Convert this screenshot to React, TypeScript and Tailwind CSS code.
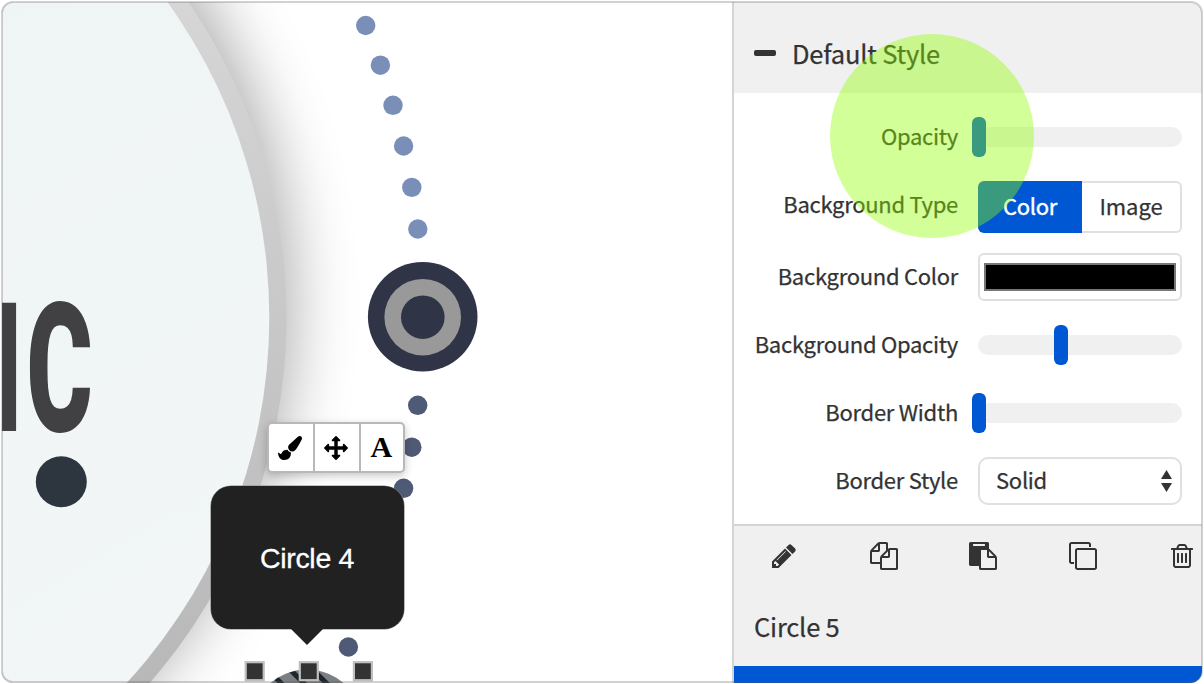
import type { ReactNode } from 'react';

const ICONS = {
  pencil:
    'M491 1536l91-91-235-235-91 91v107h128v128h107zm523-928q0-22-22-22-10 0-17 7l-542 542q-7 7-7 17 0 22 22 22 10 0 17-7l542-542q7-7 7-17zm-54-192l416 416-832 832h-416v-416zm683 96q0 53-37 90l-166 166-416-416 166-165q36-38 90-38 53 0 91 38l235 234q37 39 37 91z',
  files:
    'M1696 384q40 0 68 28t28 68v1216q0 40-28 68t-68 28h-960q-40 0-68-28t-28-68v-288h-544q-40 0-68-28t-28-68v-672q0-40 20-88t48-76l408-408q28-28 76-48t88-20h416q40 0 68 28t28 68v328q68-40 128-40h416zm-544 213l-299 299h299v-299zm-640-384l-299 299h299v-299zm196 647l316-316v-416h-384v416q0 40-28 68t-68 28h-416v640h512v-256q0-40 20-88t48-76zm956 804v-1152h-384v416q0 40-28 68t-68 28h-416v640h896z',
  paste:
    'M768 1664h896v-640h-416q-40 0-68-28t-28-68v-416h-384v1152zm256-1440v-64q0-13-9.5-22.5t-22.5-9.5h-704q-13 0-22.5 9.5t-9.5 22.5v64q0 13 9.500 22.5t22.5 9.5h704q13 0 22.5-9.5t9.5-22.5zm256 672h299l-299-299v299zm512 128v672q0 40-28 68t-68 28h-960q-40 0-68-28t-28-68v-160h-544q-40 0-68-28t-28-68v-1344q0-40 28-68t68-28h1088q40 0 68 28t28 68v328q21 13 36 28l408 408q28 28 48 76t20 88z',
  clone:
    'M1664 1632v-1088q0-13-9.5-22.5t-22.5-9.5h-1088q-13 0-22.5 9.5t-9.5 22.5v1088q0 13 9.5 22.5t22.5 9.5h1088q13 0 22.5-9.5t9.5-22.5zm128-1088v1088q0 66-47 113t-113 47h-1088q-66 0-113-47t-47-113v-1088q0-66 47-113t113-47h1088q66 0 113 47t47 113zm-384-384v160h-128v-160q0-13-9.5-22.5t-22.5-9.5h-1088q-13 0-22.5 9.5t-9.5 22.5v1088q0 13 9.5 22.5t22.5 9.5h160v128h-160q-66 0-113-47t-47-113v-1088q0-66 47-113t113-47h1088q66 0 113 47t47 113z',
  trash:
    'M704 736v576q0 14-9 23t-23 9h-64q-14 0-23-9t-9-23v-576q0-14 9-23t23-9h64q14 0 23 9t9 23zm256 0v576q0 14-9 23t-23 9h-64q-14 0-23-9t-9-23v-576q0-14 9-23t23-9h64q14 0 23 9t9 23zm256 0v576q0 14-9 23t-23 9h-64q-14 0-23-9t-9-23v-576q0-14 9-23t23-9h64q14 0 23 9t9 23zm128 724v-948h-896v948q0 22 7 40.5t14.5 27 10.5 8.5h832q3 0 10.5-8.5t14.5-27 7-40.5zm-672-1076h448l-48-117q-7-9-17-11h-317q-10 2-17 11zm928 32v64q0 14-9 23t-23 9h-96v948q0 83-47 143.5t-113 60.5h-832q-66 0-113-58.5t-47-141.5v-952h-96q-14 0-23-9t-9-23v-64q0-14 9-23t23-9h309l70-167q15-37 54-63t79-26h320q40 0 79 26t54 63l70 167h309q14 0 23 9t9 23z',
  brush:
    'M1615 0q70 0 122.5 46.5t52.5 116.5q0 63-45 151-332 629-465 752-97 91-218 91-126 0-216.5-92.5t-90.5-219.5q0-128 92-212l638-579q59-54 130-54zm-909 1034q39 76 106.5 130t150.5 76l1 71q4 213-129.5 347t-348.5 134q-123 0-218-46.5t-152.5-127.5-86.5-183-29-220q7 5 41 30t62 44.5 59 36.5 46 17q41 0 55-37 25-66 57.5-112.5t69.5-76 88-47.5 103-25.5 125-10.5z',
  move: 'M1792 896q0 26-19 45l-256 256q-19 19-45 19t-45-19-19-45v-128h-384v384h128q26 0 45 19t19 45-19 45l-256 256q-19 19-45 19t-45-19l-256-256q-19-19-19-45t19-45 45-19h128v-384h-384v128q0 26-19 45t-45 19-45-19l-256-256q-19-19-19-45t19-45l256-256q19-19 45-19t45 19 19 45v128h384v-384h-128q-26 0-45-19t-19-45 19-45l256-256q19-19 45-19t45 19l256 256q19 19 19 45t-19 45-45 19h-128v384h384v-128q0-26 19-45t45-19 45 19l256 256q19 19 19 45z',
};

function Icon({ name, className }: { name: keyof typeof ICONS; className: string }) {
  return (
    <svg viewBox="0 0 1792 1792" fill="currentColor" className={className}>
      <path d={ICONS[name]} />
    </svg>
  );
}

const UPPER_DOTS = [
  [365.7, 25.5], [380.4, 65.2], [393, 105.3], [403.6, 146], [411.8, 187.4], [417.8, 229],
];
const LOWER_DOTS = [
  [417.7, 405.3], [411.8, 447.2], [403.6, 488.3], [348.4, 647],
];

function Artwork() {
  return (
    <svg viewBox="0 0 734 684" className="block h-[684px] w-[734px]">
      <defs>
        <filter id="soft" x="-50%" y="-50%" width="200%" height="200%">
          <feGaussianBlur stdDeviation="33" />
        </filter>
        <linearGradient id="ring" gradientUnits="userSpaceOnUse" x1="170" y1="0" x2="190" y2="684">
          <stop offset="0" stopColor="#d6d6d6" />
          <stop offset="1" stopColor="#b8b8b8" />
        </linearGradient>
        <linearGradient id="disc" gradientUnits="userSpaceOnUse" x1="0" y1="0" x2="300" y2="500">
          <stop offset="0" stopColor="#eff4f5" />
          <stop offset="1" stopColor="#f2f6f7" />
        </linearGradient>
        <pattern id="hatch" width="16" height="16" patternUnits="userSpaceOnUse" patternTransform="translate(298 681) rotate(-45)">
          <rect width="16" height="16" fill="#7c8084" />
          <rect width="5" height="16" fill="#20252b" />
        </pattern>
      </defs>
      <circle cx="-266" cy="304" r="556" fill="#000" opacity="0.34" filter="url(#soft)" />
      <circle cx="-270" cy="317.5" r="556.5" fill="url(#ring)" />
      <circle cx="-270" cy="317.5" r="539.3" fill="url(#disc)" />
      <g transform="translate(26.5 431) scale(0.56 1)">
        <text fontFamily="Roboto, sans-serif" fontWeight="900" fontSize="180" fill="#414042">
          <tspan x="-61">I</tspan>
          <tspan x="0">C</tspan>
        </text>
      </g>
      <circle cx="61.3" cy="481.8" r="25.5" fill="#2d353f" />
      {UPPER_DOTS.map(([x, y]) => (
        <circle key={y} cx={x} cy={y} r="9.7" fill="#7a8fb8" />
      ))}
      {LOWER_DOTS.map(([x, y]) => (
        <circle key={y} cx={x} cy={y} r="9.7" fill="#4f5b76" />
      ))}
      <circle cx="422.7" cy="316.7" r="54.8" fill="#2f3547" />
      <circle cx="422.7" cy="317.2" r="38.3" fill="#999" />
      <circle cx="422.8" cy="317.2" r="21.8" fill="#2f3547" />
      <circle cx="307" cy="725.5" r="56" fill="url(#hatch)" />
      {[254.7, 308.8, 362.9].map((x) => (
        <rect key={x} x={x - 9} y="662.2" width="18" height="18" fill="#333" stroke="#bfbfbf" strokeWidth="2.2" />
      ))}
    </svg>
  );
}

function MiniToolbar() {
  return (
    <div className="absolute left-[267px] top-[422px] flex h-[51px] w-[137.5px] rounded-[5px] border-2 border-[#b8b8b8] bg-white text-black shadow-[0_3px_8px_rgba(0,0,0,0.22)]">
      <button className="flex w-[46px] items-center justify-center border-r-2 border-[#b8b8b8] pr-[2px]">
        <Icon name="brush" className="h-6 w-6" />
      </button>
      <button className="flex w-[46px] items-center justify-center border-r-2 border-[#b8b8b8] pr-[2px]">
        <Icon name="move" className="h-6 w-6" />
      </button>
      <button className="flex flex-1 items-center justify-center pb-[1px] pr-[1px] font-['Liberation_Serif',serif] text-[30px] font-bold leading-none">
        A
      </button>
    </div>
  );
}

function Tooltip() {
  return (
    <div className="absolute left-[211px] top-[486px] flex w-[193px] flex-col items-center">
      <div className="flex h-[143px] w-full items-center justify-center rounded-[20px] bg-[#212121] pr-[1px] pt-[2px] font-['Liberation_Sans',sans-serif] text-[28.5px] tracking-[-0.3px] text-white shadow-[0_0_0_0.6px_#888] [-webkit-text-stroke:0.3px_white]">
        <span className="whitespace-nowrap">Circle 4</span>
      </div>
      <svg viewBox="0 0 32 16" className="mr-[1px] h-4 w-8">
        <path d="M0 0h32L16 16z" fill="#212121" />
      </svg>
    </div>
  );
}

function Row({ label, tall, children }: { label: string; tall?: boolean; children: ReactNode }) {
  return (
    <div className={tall ? 'flex h-[72px] items-center' : 'flex h-[68px] items-center'}>
      <div
        className={
          tall
            ? 'w-[224px] whitespace-nowrap pb-[8px] text-right leading-8'
            : 'w-[224px] whitespace-nowrap pb-[5px] text-right leading-8'
        }
      >
        {label}
      </div>
      <div className="ml-5 w-[204px]">{children}</div>
    </div>
  );
}

function Slider({ offset }: { offset: number }) {
  return (
    <div className="flex h-5 items-center rounded-full bg-[#f0f0f0]">
      <div className="h-10 w-[14px] shrink-0 rounded-[6px] bg-[#0057d3]" style={{ marginLeft: offset }} />
    </div>
  );
}

function Panel() {
  return (
    <aside className="flex w-[470px] flex-col overflow-hidden border-l-2 border-[#d4d4d4] bg-white font-['Noto_Sans_CJK_SC',sans-serif] text-[#333] [-webkit-text-stroke:0.25px_currentColor]">
      <header className="flex h-[93px] shrink-0 items-center bg-[#f0f0f0] pl-5 pt-[12px]">
        <span className="h-[6px] w-[22px] rounded-[2px] bg-[#333]" />
        <h2 className="ml-4 text-[25.5px] leading-8 tracking-[-0.2px]">Default Style</h2>
      </header>
      <div className="h-[431px] pt-[10px] text-[22px] tracking-[-0.28px]">
        <Row label="Opacity">
          <Slider offset={-6} />
        </Row>
        <Row label="Background Type" tall>
          <div className="flex h-[52px]">
            <button className="w-[104px] rounded-l-[6px] bg-[#0057d3] pb-[4px] text-white [-webkit-text-stroke:0.4px_white]">
              Color
            </button>
            <button className="flex-1 rounded-r-[6px] border-2 border-l-0 border-[#e0e0e0] pb-[4px] tracking-[-0.1px]">
              Image
            </button>
          </div>
        </Row>
        <Row label="Background Color">
          <div className="h-12 rounded-[6px] border-2 border-[#e0e0e0] px-1 py-2">
            <div className="h-7 border-2 border-[#777] bg-black" />
          </div>
        </Row>
        <Row label="Background Opacity">
          <Slider offset={76} />
        </Row>
        <Row label="Border Width">
          <Slider offset={-6} />
        </Row>
        <Row label="Border Style">
          <div className="flex h-12 items-center justify-between rounded-[10px] border-2 border-[#e0e0e0] pl-4 pr-2">
            <span className="pb-[5px] leading-8">Solid</span>
            <svg viewBox="0 0 11 22" className="h-[22px] w-[11px]" fill="#333">
              <path d="M5.5 0L11 9H0zM0 13h11l-5.5 9z" />
            </svg>
          </div>
        </Row>
      </div>
      <footer className="flex flex-1 flex-col border-t-2 border-[#d4d4d4] bg-[#f0f0f0]">
        <div className="flex h-[60px] items-center pl-[35px]">
          <Icon name="pencil" className="ml-[1px] h-7 w-7 shrink-0" />
          <Icon name="files" className="ml-[71.5px] h-7 w-7 shrink-0" />
          <Icon name="paste" className="ml-[71.5px] h-7 w-7 shrink-0" />
          <Icon name="clone" className="ml-[71.5px] h-7 w-7 shrink-0" />
          <Icon name="trash" className="ml-[71.5px] h-7 w-7 shrink-0" />
        </div>
        <div className="flex h-20 items-center pb-[1px] pl-5 text-[25.5px] leading-8 tracking-[-0.2px]">Circle 5</div>
        <div className="flex-1 bg-[#0057d3]" />
      </footer>
    </aside>
  );
}

export default function App() {
  return (
    <div className="relative h-[684px] w-[1204px] overflow-hidden bg-white">
      <div className="flex h-full overflow-hidden [clip-path:inset(2px_2px_1px_2px_round_12px)]">
        <main className="relative w-[732px] shrink-0 overflow-hidden">
          <Artwork />
          <MiniToolbar />
          <Tooltip />
        </main>
        <Panel />
      </div>
      <div className="absolute left-[830px] top-[34px] h-[204px] w-[204px] rounded-full bg-[rgba(145,255,0,0.4)]" />
      <div className="absolute inset-x-[1px] inset-y-[1px] rounded-[12px] border-2 border-[rgba(90,95,90,0.28)]" />
    </div>
  );
}
